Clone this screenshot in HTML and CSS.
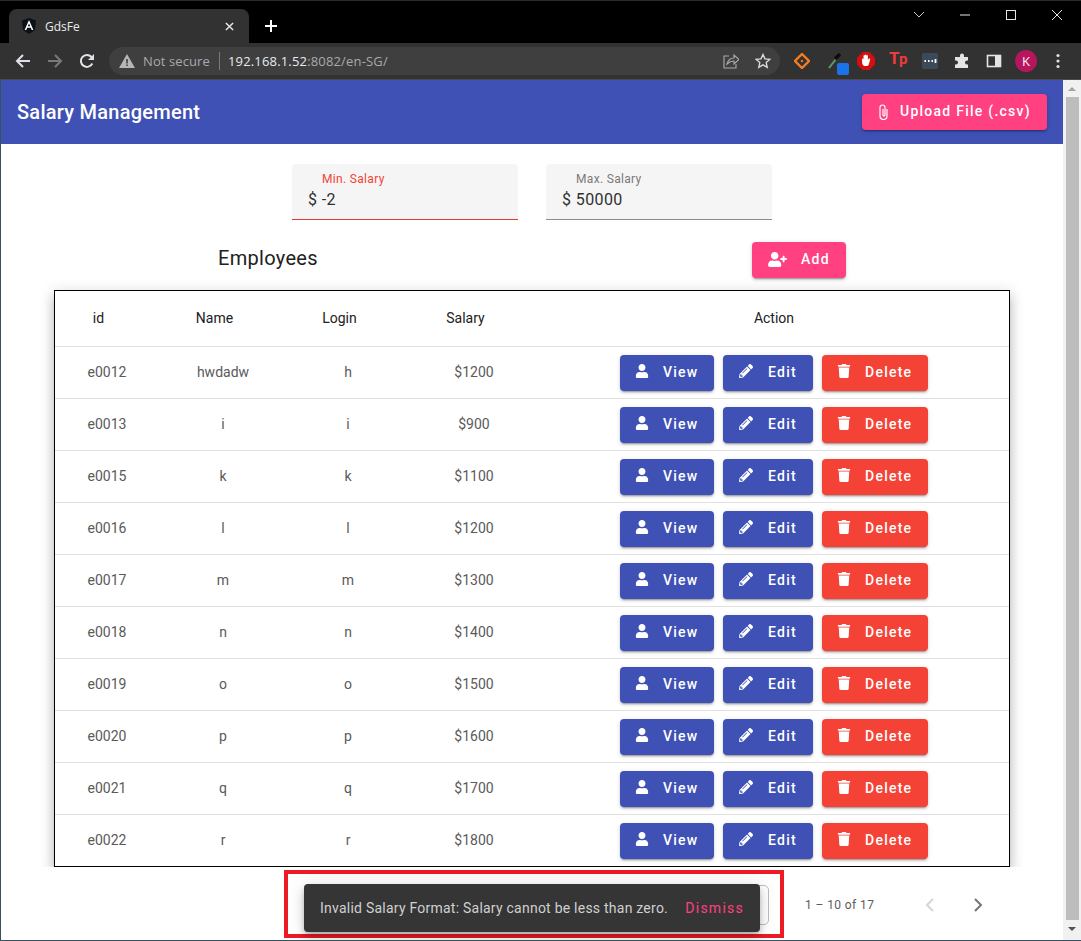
FILE: index.html
```html
<!DOCTYPE html>
<html lang="en">
<head>
<meta charset="utf-8">
<title>GdsFe</title>
<link rel="stylesheet" href="styles.css">
</head>
<body>
<svg class="defs" aria-hidden="true">
  <symbol id="i-user" viewBox="0 0 448 512"><path fill="currentColor" d="M224 256c70.7 0 128-57.3 128-128S294.7 0 224 0 96 57.3 96 128s57.3 128 128 128zm89.6 32h-16.7c-22.2 10.2-46.9 16-72.9 16s-50.6-5.8-72.9-16h-16.7C60.2 288 0 348.2 0 422.4V464c0 26.5 21.5 48 48 48h352c26.5 0 48-21.5 48-48v-41.6c0-74.2-60.2-134.4-134.4-134.4z"/></symbol>
  <symbol id="i-edit" viewBox="0 0 512 512"><path fill="currentColor" d="M497.9 142.1l-46.1 46.1c-4.7 4.7-12.3 4.7-17 0l-111-111c-4.7-4.7-4.7-12.3 0-17l46.1-46.1c18.7-18.7 49.1-18.7 67.9 0l60.1 60.1c18.8 18.7 18.8 49.1 0 67.9zM284.2 99.8L21.6 362.4.4 483.9c-2.9 16.4 11.4 30.6 27.8 27.8l121.5-21.3 262.6-262.6c4.7-4.7 4.7-12.3 0-17l-111-111c-4.8-4.7-12.4-4.7-17.1 0zM124.1 339.9c-5.5-5.5-5.5-14.3 0-19.8l154-154c5.5-5.5 14.3-5.5 19.8 0s5.5 14.3 0 19.8l-154 154c-5.5 5.5-14.3 5.5-19.8 0zM88 424h48v36.3l-64.5 11.3-31.1-31.1L51.7 376H88v48z"/></symbol>
  <symbol id="i-trash" viewBox="0 0 448 512"><path fill="currentColor" d="M432 32H312l-9.4-18.7A24 24 0 0 0 281.1 0H166.8a23.72 23.72 0 0 0-21.4 13.3L136 32H16A16 16 0 0 0 0 48v32a16 16 0 0 0 16 16h416a16 16 0 0 0 16-16V48a16 16 0 0 0-16-16zM53.2 467a48 48 0 0 0 47.9 45h245.8a48 48 0 0 0 47.9-45L416 128H32z"/></symbol>
  <symbol id="i-add" viewBox="0 0 640 512"><path fill="currentColor" d="M624 208h-64v-64c0-8.8-7.2-16-16-16h-32c-8.8 0-16 7.2-16 16v64h-64c-8.8 0-16 7.2-16 16v32c0 8.8 7.2 16 16 16h64v64c0 8.8 7.2 16 16 16h32c8.8 0 16-7.2 16-16v-64h64c8.8 0 16-7.2 16-16v-32c0-8.8-7.2-16-16-16zm-400 48c70.7 0 128-57.3 128-128S294.7 0 224 0 96 57.3 96 128s57.3 128 128 128zm89.6 32h-16.7c-22.2 10.2-46.9 16-72.9 16s-50.6-5.8-72.9-16h-16.7C60.2 288 0 348.2 0 422.4V464c0 26.5 21.5 48 48 48h352c26.5 0 48-21.5 48-48v-41.6c0-74.2-60.2-134.4-134.4-134.4z"/></symbol>
</svg>

<div class="tabstrip">
  <div class="tab">
    <svg class="favicon" viewBox="0 0 16 16"><path fill="#0c1018" d="M8 0 1 2.500 2 12l6 4 6-4 1-9.500z"/><path fill="#fff" d="M8 2 3.600 12h1.700l.9-2.300h3.600l.9 2.300h1.700zm-1.200 6.300L8 5.400l1.200 2.900z"/></svg>
    <span class="tab-title">GdsFe</span>
    <svg class="tab-close" viewBox="0 0 10 10"><path d="M1 1l8 8M9 1l-8 8" stroke="#e8eaed" stroke-width="1.600"/></svg>
  </div>
  <svg class="new-tab" viewBox="0 0 12 12"><path d="M6 0v12M0 6h12" stroke="#fff" stroke-width="2"/></svg>
  <div class="window-controls">
    <svg class="wc" viewBox="0 0 46 16"><path d="M18 5l5 5 5-5" fill="none" stroke="#c8c8c8"/></svg>
    <svg class="wc" viewBox="0 0 46 16"><path d="M18 8h10" stroke="#e8e8e8"/></svg>
    <svg class="wc" viewBox="0 0 46 16"><rect x="18.500" y="3.500" width="9" height="9" fill="none" stroke="#e8e8e8"/></svg>
    <svg class="wc" viewBox="0 0 46 16"><path d="M18 3l10 10M28 3L18 13" stroke="#e8e8e8"/></svg>
  </div>
</div>

<div class="toolbar">
  <div class="tb-btn"><svg viewBox="0 0 16 16"><path d="M15 8H2M8 2 2 8l6 6" fill="none" stroke="#dee1e6" stroke-width="2"/></svg></div>
  <div class="tb-btn"><svg viewBox="0 0 16 16"><path d="M1 8h13M8 2l6 6-6 6" fill="none" stroke="#77797c" stroke-width="2"/></svg></div>
  <div class="tb-btn"><svg viewBox="0 0 16 16"><path d="M13.300 10.500A6 6 0 1 1 12.300 3.800L14 5.500" fill="none" stroke="#dee1e6" stroke-width="2"/><path d="M15 1v6H9z" fill="#dee1e6"/></svg></div>
  <div class="omnibox">
    <svg class="warn" viewBox="0 0 16 14"><path fill="#b4b6b8" d="M8 0l8 14H0z"/><path fill="#3f3f3f" d="M7.200 5h1.600v4.500H7.200zM7.200 10.500h1.600V12H7.200z"/></svg>
    <span class="not-secure">Not secure</span>
    <span class="divider"></span>
    <span class="url"><b>192.168.1.52</b>:8082/en-SG/</span>
    <svg class="omni-ic share" viewBox="0 0 16 16"><path d="M6 3H1v12h12v-4" fill="none" stroke="#a8aaad" stroke-width="1.100"/><path d="M4 11c1-4 4-6 7-6V2l5 4.500L11 11V8c-3 0-5 1-7 3z" fill="none" stroke="#a8aaad" stroke-width="1.100"/></svg>
    <svg class="omni-ic" viewBox="0 0 16 16"><path d="M8 1.500l2 4.400 4.800.5-3.600 3.200 1 4.700L8 11.900l-4.200 2.400 1-4.700L1.200 6.400 6 5.900z" fill="none" stroke="#d8dadc" stroke-width="1.400"/></svg>
  </div>
  <div class="tb-btn"><svg viewBox="0 0 16 16"><path d="M8 1l7 7-7 7-7-7z" fill="none" stroke="#f57c20" stroke-width="2.400"/><path d="M6.500 8 8 6.500 9.500 8 8 9.500z" fill="#f57c20"/></svg></div>
  <div class="tb-btn ext-pick">
    <svg viewBox="0 0 16 16"><path d="M3 15 10 6" stroke="#5f9a6e" stroke-width="2"/><path d="M9 6l5-5" stroke="#0c0c0c" stroke-width="3.200"/></svg>
    <span class="ext-badge"></span>
  </div>
  <div class="tb-btn"><svg class="ext-big" viewBox="0 0 16 16"><path fill="#d50f0f" d="M5 0h6l5 5v6l-5 5H5l-5-5V5z"/><path fill="#fff" d="M4.500 6.500c0-1 1.300-1 1.300 0V3.500c0-1 1.200-1 1.200 0V3c0-1 1.400-1 1.400 0v.500c0-1 1.300-1 1.300 0V7l.8-1c.7-.7 1.600 0 1.100.800L10.500 11c-.5 1-1 1.500-2.500 1.500-2.500 0-3.500-1.500-3.500-3.500z"/></svg></div>
  <div class="tb-btn"><span class="tp">T<span class="tp-low">p</span></span></div>
  <div class="tb-btn"><svg viewBox="0 0 16 16"><rect width="16" height="16" rx="1.500" fill="#3a4a58"/><path d="M2.500 8h1.500M6 8h1.500M9.500 8H11M13.500 6v4" stroke="#fff" stroke-width="1.800"/></svg></div>
  <div class="tb-btn"><svg viewBox="0 0 16 16"><path fill="#e4e4e4" d="M6 2.500a2 2 0 0 1 4 0V4h4v3.500h-1a2 2 0 0 0 0 4h1V15H1v-3.500h1a2 2 0 0 0 0-4H1V4h5z"/></svg></div>
  <div class="tb-btn"><svg viewBox="0 0 16 16"><rect x="1.500" y="2.500" width="13" height="11" fill="none" stroke="#e4e4e4" stroke-width="1.600"/><rect x="9" y="2" width="6" height="12" fill="#e4e4e4"/></svg></div>
  <div class="tb-btn"><span class="avatar">K</span></div>
  <div class="tb-btn"><svg viewBox="0 0 16 16"><circle cx="8" cy="2.500" r="1.600" fill="#dee1e6"/><circle cx="8" cy="8" r="1.600" fill="#dee1e6"/><circle cx="8" cy="13.500" r="1.600" fill="#dee1e6"/></svg></div>
</div>

<div class="viewport">
  <main class="page">
    <header class="appbar">
      <h1 class="app-title">Salary Management</h1>
      <button class="btn btn-pink btn-upload">
        <svg class="clip" viewBox="0 0 9 16"><path d="M8 5v7a3.500 3.500 0 0 1-7 0V3.500a2.500 2.500 0 0 1 5 0V11a1 1 0 0 1-2 0V5" fill="none" stroke="#fff" stroke-width="1.200"/></svg>
        <span>Upload File (.csv)</span>
      </button>
    </header>

    <section class="filters">
      <div class="field field-error">
        <span class="field-label">Min. Salary</span>
        <span class="field-value">$ -2</span>
      </div>
      <div class="field">
        <span class="field-label">Max. Salary</span>
        <span class="field-value">$ 50000</span>
      </div>
    </section>

    <section class="title-row">
      <h2 class="section-title">Employees</h2>
      <button class="btn btn-pink btn-add"><svg class="ic ic-add"><use href="#i-add"/></svg><span>Add</span></button>
    </section>

    <table class="emp-table">
      <colgroup><col class="c-id"><col class="c-name"><col class="c-login"><col class="c-salary"><col class="c-action"></colgroup>
      <thead>
        <tr><th class="sh">id</th><th class="sh">Name</th><th class="sh">Login</th><th class="sh">Salary</th><th>Action</th></tr>
      </thead>
      <tbody>
        <tr><td>e0012</td><td>hwdadw</td><td>h</td><td>$1200</td><td><div class="actions"><button class="btn btn-view"><svg class="ic"><use href="#i-user"/></svg><span>View</span></button><button class="btn btn-edit"><svg class="ic"><use href="#i-edit"/></svg><span>Edit</span></button><button class="btn btn-del"><svg class="ic"><use href="#i-trash"/></svg><span>Delete</span></button></div></td></tr>
        <tr><td>e0013</td><td>i</td><td>i</td><td>$900</td><td><div class="actions"><button class="btn btn-view"><svg class="ic"><use href="#i-user"/></svg><span>View</span></button><button class="btn btn-edit"><svg class="ic"><use href="#i-edit"/></svg><span>Edit</span></button><button class="btn btn-del"><svg class="ic"><use href="#i-trash"/></svg><span>Delete</span></button></div></td></tr>
        <tr><td>e0015</td><td>k</td><td>k</td><td>$1100</td><td><div class="actions"><button class="btn btn-view"><svg class="ic"><use href="#i-user"/></svg><span>View</span></button><button class="btn btn-edit"><svg class="ic"><use href="#i-edit"/></svg><span>Edit</span></button><button class="btn btn-del"><svg class="ic"><use href="#i-trash"/></svg><span>Delete</span></button></div></td></tr>
        <tr><td>e0016</td><td>l</td><td>l</td><td>$1200</td><td><div class="actions"><button class="btn btn-view"><svg class="ic"><use href="#i-user"/></svg><span>View</span></button><button class="btn btn-edit"><svg class="ic"><use href="#i-edit"/></svg><span>Edit</span></button><button class="btn btn-del"><svg class="ic"><use href="#i-trash"/></svg><span>Delete</span></button></div></td></tr>
        <tr><td>e0017</td><td>m</td><td>m</td><td>$1300</td><td><div class="actions"><button class="btn btn-view"><svg class="ic"><use href="#i-user"/></svg><span>View</span></button><button class="btn btn-edit"><svg class="ic"><use href="#i-edit"/></svg><span>Edit</span></button><button class="btn btn-del"><svg class="ic"><use href="#i-trash"/></svg><span>Delete</span></button></div></td></tr>
        <tr><td>e0018</td><td>n</td><td>n</td><td>$1400</td><td><div class="actions"><button class="btn btn-view"><svg class="ic"><use href="#i-user"/></svg><span>View</span></button><button class="btn btn-edit"><svg class="ic"><use href="#i-edit"/></svg><span>Edit</span></button><button class="btn btn-del"><svg class="ic"><use href="#i-trash"/></svg><span>Delete</span></button></div></td></tr>
        <tr><td>e0019</td><td>o</td><td>o</td><td>$1500</td><td><div class="actions"><button class="btn btn-view"><svg class="ic"><use href="#i-user"/></svg><span>View</span></button><button class="btn btn-edit"><svg class="ic"><use href="#i-edit"/></svg><span>Edit</span></button><button class="btn btn-del"><svg class="ic"><use href="#i-trash"/></svg><span>Delete</span></button></div></td></tr>
        <tr><td>e0020</td><td>p</td><td>p</td><td>$1600</td><td><div class="actions"><button class="btn btn-view"><svg class="ic"><use href="#i-user"/></svg><span>View</span></button><button class="btn btn-edit"><svg class="ic"><use href="#i-edit"/></svg><span>Edit</span></button><button class="btn btn-del"><svg class="ic"><use href="#i-trash"/></svg><span>Delete</span></button></div></td></tr>
        <tr><td>e0021</td><td>q</td><td>q</td><td>$1700</td><td><div class="actions"><button class="btn btn-view"><svg class="ic"><use href="#i-user"/></svg><span>View</span></button><button class="btn btn-edit"><svg class="ic"><use href="#i-edit"/></svg><span>Edit</span></button><button class="btn btn-del"><svg class="ic"><use href="#i-trash"/></svg><span>Delete</span></button></div></td></tr>
        <tr class="last"><td>e0022</td><td>r</td><td>r</td><td>$1800</td><td><div class="actions"><button class="btn btn-view"><svg class="ic"><use href="#i-user"/></svg><span>View</span></button><button class="btn btn-edit"><svg class="ic"><use href="#i-edit"/></svg><span>Edit</span></button><button class="btn btn-del"><svg class="ic"><use href="#i-trash"/></svg><span>Delete</span></button></div></td></tr>
      </tbody>
    </table>

    <nav class="paginator">
      <div class="page-size"></div>
      <span class="range">1 – 10 of 17</span>
      <svg class="chev" viewBox="0 0 10 16"><path d="M8 2 2 8l6 6" fill="none" stroke="#d6d6d6" stroke-width="2"/></svg>
      <svg class="chev" viewBox="0 0 10 16"><path d="M2 2l6 6-6 6" fill="none" stroke="#757575" stroke-width="2"/></svg>
    </nav>

    <div class="annotation">
      <div class="snackbar">
        <span class="snack-text">Invalid Salary Format: Salary cannot be less than zero.</span>
        <span class="snack-action">Dismiss</span>
      </div>
    </div>
  </main>
  <aside class="scrollbar">
    <span class="sb-arrow sb-up"></span>
    <span class="sb-thumb"></span>
    <span class="sb-arrow sb-down"></span>
  </aside>
</div>
</body>
</html>
```
FILE: styles.css
```css
* { box-sizing: border-box; }
html, body { margin: 0; height: 100%; }
body {
  width: 1081px;
  height: 941px;
  overflow: hidden;
  background: #35535f;
  display: flex;
  flex-direction: column;
  font-family: Roboto, "Liberation Sans", sans-serif;
  color: #212121;
}
.defs { display: none; }

/* browser chrome */
.tabstrip {
  height: 43px;
  flex: none;
  background: #000;
  display: flex;
  align-items: flex-end;
  padding-left: 9px;
  border-top: 1px solid #2a2a2a;
}
.tab {
  width: 240px;
  height: 34px;
  background: #323232;
  border-radius: 8px 8px 0 0;
  display: flex;
  align-items: center;
  padding: 0 10px 0 12px;
  color: #e8eaed;
  font: 12px "Open Sans", sans-serif;
}
.favicon { width: 16px; height: 16px; }
.tab-title { margin-left: 8px; flex: 1; }
.tab-close { width: 9px; height: 9px; margin-right: 5px; }
.new-tab { width: 12px; height: 12px; margin: 0 0 11px 16px; }
.window-controls {
  margin-left: auto;
  align-self: flex-start;
  display: flex;
  margin-top: 6px;
  margin-right: 1px;
}
.wc { width: 46px; height: 16px; }

.toolbar {
  height: 37px;
  flex: none;
  background: #323232;
  display: flex;
  align-items: center;
  padding: 0 7px;
  border-bottom: 1px solid #4a4a4a;
}
.tb-btn {
  width: 32px;
  height: 32px;
  flex: none;
  display: flex;
  align-items: center;
  justify-content: center;
  position: relative;
}
.tb-btn svg { width: 16px; height: 16px; }
.tb-btn svg.ext-big { width: 18px; height: 18px; }
.ext-badge {
  position: absolute;
  left: 19px;
  top: 18px;
  width: 12px;
  height: 12px;
  border-radius: 2px;
  background: #1a73e8;
}
.tp { color: #ee3b3b; font: 700 17px/1 Roboto, sans-serif; letter-spacing: -.5px; margin-top: -5px; }
.tp-low { font-size: 15px; }
.avatar {
  width: 22px;
  height: 22px;
  border-radius: 50%;
  background: #b8155f;
  color: #f5f5f5;
  font: 13px/22px "Open Sans", sans-serif;
  text-align: center;
}
.omnibox {
  flex: 1;
  height: 28px;
  margin: 0 6px;
  background: #3f3f3f;
  border-radius: 14px;
  display: flex;
  align-items: center;
  padding-left: 10px;
  padding-right: 9px;
  font: 13px "Open Sans", sans-serif;
  color: #a8aaad;
}
.warn { width: 16px; height: 14px; }
.not-secure { margin-left: 8px; letter-spacing: .1px; }
.divider { width: 1px; height: 18px; background: #7a7a7a; margin: 0 8px 0 9px; }
.url { letter-spacing: .17px; }
.url b { font-weight: 400; color: #e8eaed; }
.omni-ic { width: 16px; height: 16px; margin-left: 16px; }
.share { margin-left: auto; }

/* page */
.viewport {
  flex: 1;
  min-height: 0;
  display: flex;
  margin: 0 0 1px 1px;
  background: #fff;
}
.page {
  flex: 1;
  min-width: 0;
  position: relative;
  overflow: hidden;
  background: #fff;
}
.appbar {
  height: 64px;
  background: #3f51b5;
  display: flex;
  align-items: center;
  justify-content: space-between;
  padding: 0 16px;
}
.app-title { margin: 0; font-size: 20px; font-weight: 500; color: #fff; letter-spacing: .25px; }

.btn {
  border: 0;
  border-radius: 4px;
  height: 36px;
  color: #fff;
  font: 500 14px/36px Roboto, sans-serif;
  letter-spacing: 1.25px;
  display: inline-flex;
  align-items: center;
  padding: 0;
  box-shadow: 0 3px 1px -2px rgba(0,0,0,.2), 0 2px 2px 0 rgba(0,0,0,.14), 0 1px 5px 0 rgba(0,0,0,.12);
}
.btn span { margin-top: -2px; }
.btn-pink { background: #ff4081; }
.btn-upload { width: 185px; padding-left: 17px; gap: 12px; }
.clip { width: 9px; height: 16px; flex: none; }
.ic { width: 14px; height: 14px; flex: none; margin-top: -4px; }
.btn-add { width: 94px; padding-left: 16px; gap: 14px; }
.ic.ic-add { width: 19px; height: 15px; margin-top: -1px; }
.btn-view { width: 94px; background: #3f51b5; padding-left: 15px; gap: 14px; }
.btn-edit { width: 90px; background: #3f51b5; padding-left: 16px; gap: 15px; }
.btn-del { width: 106px; background: #f44336; padding-left: 15px; gap: 14px; }

.filters {
  display: flex;
  justify-content: center;
  gap: 28px;
  padding-top: 20px;
}
.field {
  width: 226px;
  height: 56px;
  background: #f5f5f5;
  border-radius: 4px 4px 0 0;
  border-bottom: 1px solid #8c8c8c;
  padding: 8px 16px 0;
  display: flex;
  flex-direction: column;
}
.field-label { font-size: 12px; line-height: 14px; color: #7a7a7a; padding-left: 14px; letter-spacing: .32px; }
.field-value { font-size: 16px; line-height: 20px; margin-top: 4px; letter-spacing: .4px; color: #303030; }
.field-error { border-bottom-color: #e53935; }
.field-error .field-label { color: #f44336; }

.title-row {
  display: flex;
  align-items: center;
  justify-content: space-between;
  margin-top: 22px;
  padding-left: 217px;
  padding-right: 217px;
  height: 36px;
}
.section-title { margin: 0 0 5px; font-size: 20px; font-weight: 400; color: #212121; line-height: 32px; letter-spacing: .3px; }

.emp-table {
  width: 956px;
  margin: 12px 0 0 53px;
  table-layout: fixed;
  border-collapse: separate;
  border-spacing: 0;
  border: 1px solid #000;
  background: #fff;
  box-shadow: 0 5px 5px -3px rgba(0,0,0,.2), 0 8px 10px 1px rgba(0,0,0,.14), 0 3px 14px 2px rgba(0,0,0,.12);
}
.c-id { width: 104px; }
.c-name { width: 128px; }
.c-login { width: 122px; }
.c-salary { width: 130px; }
th, td { padding: 0; text-align: center; border-bottom: 1px solid #e0e0e0; }
th { height: 56px; font-size: 14px; font-weight: 400; color: #212121; padding-bottom: 2px; }
th.sh { padding-right: 17px; }
td { height: 52px; font-size: 14px; color: #5a5a5a; }
td:not(:last-child) { padding-bottom: 2px; }
tr.last td { border-bottom: 0; height: 51px; }
.actions { display: flex; justify-content: center; gap: 9px; }

.paginator {
  position: relative;
  background: #fff;
  display: flex;
  align-items: center;
  height: 76px;
  padding-left: 698px;
}
.page-size {
  width: 70px;
  height: 40px;
  border: 1px solid #bdbdbd;
  border-radius: 5px;
}
.range { margin-left: 36px; font-size: 12px; color: #5c5c5c; width: 68px; white-space: nowrap; letter-spacing: .4px; }
.chev { width: 10px; height: 16px; flex: none; }
.chev + .chev { margin-left: 38px; }
.range + .chev { margin-left: 52px; }

.annotation {
  position: absolute;
  left: 283px;
  top: 790px;
  width: 500px;
  height: 68px;
  border: 4px solid #ed1c24;
  padding: 10px 0 0 16px;
}
.snackbar {
  width: 456px;
  height: 48px;
  background: #353535;
  border-radius: 4px;
  display: flex;
  align-items: center;
  justify-content: space-between;
  padding: 0 16px;
  box-shadow: 0 3px 5px -1px rgba(0,0,0,.2), 0 6px 10px 0 rgba(0,0,0,.14), 0 1px 18px 0 rgba(0,0,0,.12);
}
.snack-text { font-size: 14px; color: #d0d0d0; letter-spacing: .235px; white-space: nowrap; }
.snack-action { font-size: 14px; font-weight: 400; color: #ff4081; letter-spacing: 1.25px; }

.scrollbar {
  width: 18px;
  flex: none;
  background: #f1f1f1;
  display: flex;
  flex-direction: column;
  align-items: center;
}
.sb-thumb { width: 13px; height: 823px; background: #bdbdbd; }
.sb-arrow { width: 0; height: 0; border-left: 4px solid transparent; border-right: 4px solid transparent; flex: none; }
.sb-up { border-bottom: 4px solid #a3a3a3; margin: 7px 0 6px; }
.sb-down { border-top: 4px solid #505050; margin: 7px 0; }
```
